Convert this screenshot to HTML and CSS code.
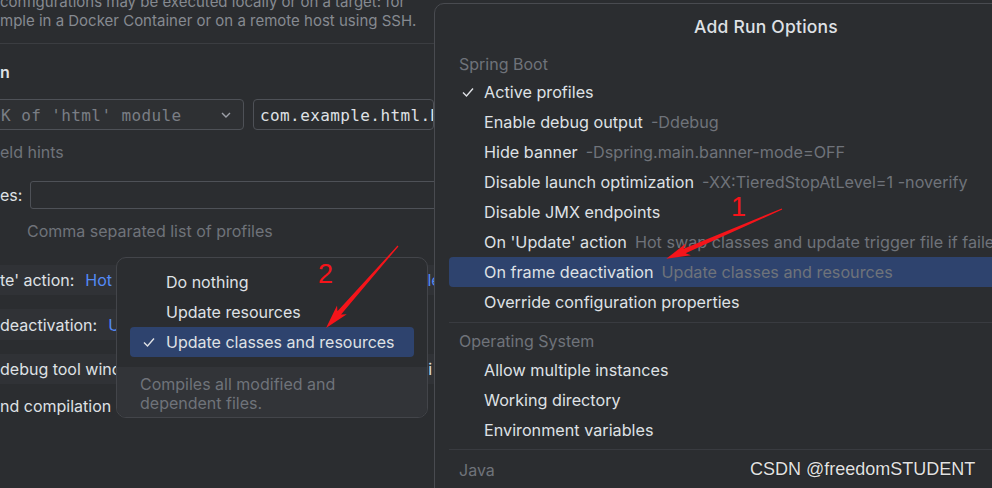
FILE: index.html
```html
<!DOCTYPE html>
<html>
<head>
<meta charset="utf-8">
<link rel="stylesheet" href="styles.css">
</head>
<body>
<div class="dialog">
  <div class="desc">
    <div>configurations may be executed locally or on a target: for</div>
    <div>mple in a Docker Container or on a remote host using SSH.</div>
  </div>
  <div class="sep"></div>
  <div class="heading">n</div>
  <div class="fields">
    <div class="combo"><span class="mono dim">SDK of 'html' module</span><svg class="chev" width="12" height="8" viewBox="0 0 12 8"><polyline points="2,2 6,6 10,2" fill="none" stroke="#9da0a8" stroke-width="1.4"/></svg></div>
    <div class="tfield"><span class="mono">com.example.html.HtmlApplication</span></div>
  </div>
  <div class="hint hints">eld hints</div>
  <div class="profiles">
    <span class="plabel">es:</span>
    <div class="pinput"></div>
  </div>
  <div class="hint comma">Comma separated list of profiles</div>
  <div class="row strip r1"><span>te' action:</span><span class="link">Hot swap classes and update trigger file if failed</span></div>
  <div class="row strip short r2"><span>deactivation:</span><span class="link">Update classes and resources</span></div>
  <div class="row strip r3"><span>debug tool window when started</span><span class="tail">i</span></div>
  <div class="row r4"><span>nd compilation</span></div>
</div>

<div class="menu">
  <div class="mitem"><span class="mtext">Do nothing</span></div>
  <div class="mitem"><span class="mtext">Update resources</span></div>
  <div class="mitem sel"><svg class="check" width="12" height="12" viewBox="0 0 12 12"><polyline points="1,6.5 4.5,10 11,2.5" fill="none" stroke="#dfe1e5" stroke-width="1.4"/></svg><span class="mtext">Update classes and resources</span></div>
  <div class="mfoot">Compiles all modified and<br>dependent files.</div>
</div>

<div class="popup">
  <div class="ptitle">Add Run Options</div>
  <div class="group">Spring Boot</div>
  <div class="opt"><svg class="check" width="12" height="12" viewBox="0 0 12 12"><polyline points="1,6.5 4.5,10 11,2.5" fill="none" stroke="#dfe1e5" stroke-width="1.4"/></svg><span>Active profiles</span></div>
  <div class="opt"><span>Enable debug output</span><span class="ohint">-Ddebug</span></div>
  <div class="opt"><span>Hide banner</span><span class="ohint">-Dspring.main.banner-mode=OFF</span></div>
  <div class="opt"><span>Disable launch optimization</span><span class="ohint">-XX:TieredStopAtLevel=1 -noverify</span></div>
  <div class="opt"><span>Disable JMX endpoints</span></div>
  <div class="opt"><span>On 'Update' action</span><span class="ohint">Hot swap classes and update trigger file if failed</span></div>
  <div class="opt sel"><span>On frame deactivation</span><span class="ohint">Update classes and resources</span></div>
  <div class="opt"><span>Override configuration properties</span></div>
  <div class="psep"></div>
  <div class="group g2">Operating System</div>
  <div class="opt"><span>Allow multiple instances</span></div>
  <div class="opt"><span>Working directory</span></div>
  <div class="opt"><span>Environment variables</span></div>
  <div class="psep s2"></div>
  <div class="group g3">Java</div>
</div>

<div class="watermark">CSDN @freedomSTUDENT</div>

<svg class="arrows" width="992" height="488" viewBox="0 0 992 488">
  <polygon transform="translate(782,209) rotate(156.7)" points="0,-0.6 106,-2.4 102,-6.5 126,0 102,6.5 106,2.4 0,0.6" fill="#f5141a"/>
  <polygon transform="translate(398,246) rotate(131.3)" points="0,-0.6 89,-2.4 85,-6.5 109,0 85,6.5 89,2.4 0,0.6" fill="#f5141a"/>
</svg>
<span class="num n1">1</span>
<span class="num n2">2</span>
</body>
</html>
```

FILE: styles.css
```css
* { box-sizing: border-box; }
html, body { margin: 0; padding: 0; }
body {
  width: 992px;
  height: 488px;
  overflow: hidden;
  position: relative;
  background: #2b2d30;
  font-family: Inter, "Noto Sans", sans-serif;
  font-size: 16px;
  color: #dfe1e5;
}
.dialog {
  width: 434px;
  height: 488px;
  overflow: hidden;
  white-space: nowrap;
}
.desc {
  margin-top: -8px;
  line-height: 19px;
  font-size: 15px;
  color: #868a91;
}
.sep {
  margin-top: 13px;
  height: 1px;
  background: #3b3d41;
}
.heading {
  margin-top: 18px;
  line-height: 20px;
  font-weight: 600;
}
.fields {
  margin-top: 17px;
  display: flex;
  gap: 9px;
  height: 31px;
}
.mono {
  font-family: "DejaVu Sans Mono", "Liberation Mono", monospace;
  font-size: 16px;
  letter-spacing: 0.4px;
  padding-top: 2px;
}
.dim { color: #7a7e85; }
.combo {
  flex: none;
  width: 264px;
  margin-left: -20px;
  border: 1px solid #4e5157;
  border-radius: 4px;
  background: #2e3033;
  display: flex;
  align-items: center;
  overflow: hidden;
}
.combo .mono { flex: 1; overflow: hidden; }
.chev { flex: none; margin: 0 11px 0 8px; }
.tfield {
  flex: 1;
  border: 1px solid #4e5157;
  border-radius: 4px;
  display: flex;
  align-items: center;
  padding-left: 6px;
  overflow: hidden;
}
.hint { color: #6f737a; line-height: 20px; }
.hints { margin-top: 12px; }
.profiles {
  margin-top: 19px;
  display: flex;
  align-items: center;
  gap: 16px;
  height: 28px;
}
.plabel { width: 14px; }
.pinput {
  flex: none;
  width: 440px;
  height: 28px;
  border: 1px solid #4e5157;
  border-radius: 3px;
}
.comma { margin-top: 12px; padding-left: 27px; }
.row {
  height: 30px;
  display: flex;
  align-items: center;
  gap: 11px;
}
.strip { background: #303236; }
.short { width: 400px; }
.r1 { margin-top: 24px; }
.r2 { margin-top: 14px; height: 31px; }
.r3 { margin-top: 14px; height: 30px; }
.r4 { margin-top: 7px; }
.link { color: #548af7; }
.tail { margin-left: auto; padding-right: 2px; }

.menu {
  position: absolute;
  left: 116px;
  top: 257px;
  width: 312px;
  height: 161px;
  background: #2b2d30;
  border: 1px solid #43454a;
  border-radius: 10px;
  overflow: hidden;
  padding-top: 9px;
  display: flex;
  flex-direction: column;
}
.mitem {
  height: 30px;
  margin: 0 13px;
  border-radius: 4px;
  display: flex;
  align-items: center;
  padding-left: 36px;
  position: relative;
}
.mitem.sel { background: #2e436e; }
.check { position: absolute; left: 13px; top: 9px; }
.mfoot {
  margin-top: 10px;
  flex: 1;
  background: #323438;
  color: #6f737a;
  line-height: 19px;
  padding: 8px 0 0 23px;
  white-space: nowrap;
}

.popup {
  position: absolute;
  left: 434px;
  top: 3px;
  width: 664px;
  height: 520px;
  background: #2b2d30;
  border: 1px solid #494b50;
  border-radius: 10px;
  white-space: nowrap;
  overflow: hidden;
}
.ptitle {
  margin-top: 13px;
  line-height: 20px;
  text-align: center;
  font-size: 17.5px;
  font-weight: 500;
  letter-spacing: 0.2px;
}
.group {
  margin-top: 17px;
  line-height: 20px;
  padding-left: 24px;
  color: #6f737a;
}
.opt {
  height: 30px;
  margin-left: 14px;
  padding-left: 35px;
  display: flex;
  align-items: center;
  position: relative;
  border-radius: 4px 0 0 4px;
  font-size: 16.2px;
}
.group + .opt { margin-top: 3px; }
.opt.sel { background: #2e436e; }
.ohint { color: #6f737a; margin-left: 8px; }
.psep { margin: 5px 0 0 14px; height: 1px; background: #393b40; }
.s2 { margin-top: 4px; }
.g2 { margin-top: 8px; }
.g2 + .opt { margin-top: 4px; }
.g3 { margin-top: 10px; }

.watermark {
  position: absolute;
  left: 750px;
  top: 458px;
  font-family: "Liberation Sans", Arial, sans-serif;
  font-size: 18px;
  line-height: 22px;
  color: #e2e2e2;
  text-shadow: 0 0 1px #000;
}
.arrows { position: absolute; left: 0; top: 0; pointer-events: none; }
.num {
  position: absolute;
  font-family: "Liberation Sans", Arial, sans-serif;
  font-size: 27px;
  line-height: 30px;
  color: #f5141a;
}
.n1 { left: 731px; top: 192px; }
.n2 { left: 318px; top: 259px; }
```
